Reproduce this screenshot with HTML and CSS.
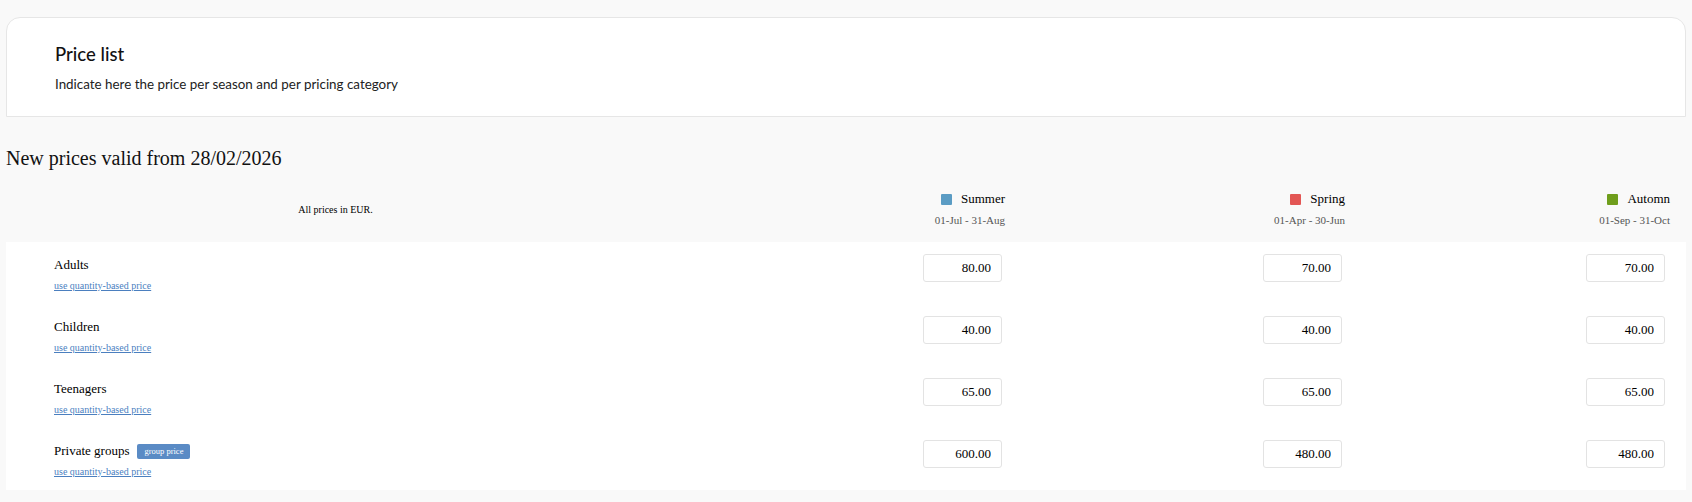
FILE: index.html
```html
<!DOCTYPE html>
<html lang="en">

<head>
    <meta charset="UTF-8">
    <meta name="viewport" content="width=device-width, initial-scale=1.0">
    <title>Price list</title>
    <link rel="stylesheet" href="styles.css">
</head>

<body>
    <div class="page">
        <section class="intro-card">
            <h1 class="intro-title">Price list</h1>
            <p class="intro-text">Indicate here the price per season and per pricing category</p>
        </section>

        <h2 class="valid-from">New prices valid from 28/02/2026</h2>

        <div class="price-table">
            <div class="price-head">
                <div class="currency-note">All prices in EUR.</div>
                <div class="season">
                    <div class="season-name"><span class="swatch swatch-summer"></span>Summer</div>
                    <div class="season-dates">01-Jul - 31-Aug</div>
                </div>
                <div class="season">
                    <div class="season-name"><span class="swatch swatch-spring"></span>Spring</div>
                    <div class="season-dates">01-Apr - 30-Jun</div>
                </div>
                <div class="season">
                    <div class="season-name"><span class="swatch swatch-autumn"></span>Automn</div>
                    <div class="season-dates">01-Sep - 31-Oct</div>
                </div>
            </div>

            <div class="price-body">
                <div class="price-row">
                    <div class="category">
                        <div class="category-name">Adults</div>
                        <a class="quantity-link" href="#">use quantity-based price</a>
                    </div>
                    <div class="price-cell"><input class="price-input" type="text" value="80.00"></div>
                    <div class="price-cell"><input class="price-input" type="text" value="70.00"></div>
                    <div class="price-cell"><input class="price-input" type="text" value="70.00"></div>
                </div>

                <div class="price-row">
                    <div class="category">
                        <div class="category-name">Children</div>
                        <a class="quantity-link" href="#">use quantity-based price</a>
                    </div>
                    <div class="price-cell"><input class="price-input" type="text" value="40.00"></div>
                    <div class="price-cell"><input class="price-input" type="text" value="40.00"></div>
                    <div class="price-cell"><input class="price-input" type="text" value="40.00"></div>
                </div>

                <div class="price-row">
                    <div class="category">
                        <div class="category-name">Teenagers</div>
                        <a class="quantity-link" href="#">use quantity-based price</a>
                    </div>
                    <div class="price-cell"><input class="price-input" type="text" value="65.00"></div>
                    <div class="price-cell"><input class="price-input" type="text" value="65.00"></div>
                    <div class="price-cell"><input class="price-input" type="text" value="65.00"></div>
                </div>

                <div class="price-row">
                    <div class="category">
                        <div class="category-name">Private groups <span class="group-badge">group price</span></div>
                        <a class="quantity-link" href="#">use quantity-based price</a>
                    </div>
                    <div class="price-cell"><input class="price-input" type="text" value="600.00"></div>
                    <div class="price-cell"><input class="price-input" type="text" value="480.00"></div>
                    <div class="price-cell"><input class="price-input" type="text" value="480.00"></div>
                </div>
            </div>
        </div>
    </div>
</body>

</html>
```

FILE: styles.css
```css
* {
    margin: 0;
    padding: 0;
    box-sizing: border-box;
}

body {
    background-color: #f9f9f9;
    color: #111;
    font-family: 'Liberation Serif', 'Times New Roman', serif;
}

.page {
    padding: 17px 6px 0;
}

/* intro card */
.intro-card {
    background: white;
    border: 1px solid #e6e6e6;
    border-radius: 14px 14px 0 0;
    height: 100px;
    padding: 25px 48px 0;
    font-family: Lato, 'Open Sans', sans-serif;
}

.intro-title {
    font-size: 18.5px;
    line-height: 22px;
    font-weight: 500;
    color: #111;
}

.intro-text {
    margin-top: 11px;
    font-size: 13.4px;
    line-height: 16px;
    color: #222;
}

.valid-from {
    margin-top: 29px;
    font-size: 20px;
    line-height: 24px;
    font-weight: normal;
    color: #111;
}

/* table */
.price-head,
.price-row {
    display: grid;
    grid-template-columns: 1fr 340px 340px 325px;
    padding-right: 16px;
}

.price-head {
    padding-top: 21px;
    padding-bottom: 15px;
}

.currency-note {
    align-self: center;
    text-align: center;
    font-size: 10px;
    color: #000;
}

.season {
    text-align: right;
}

.season-name {
    display: flex;
    justify-content: flex-end;
    align-items: center;
    font-size: 13px;
    line-height: 16px;
    color: #000;
}

.swatch {
    width: 11px;
    height: 11px;
    border-radius: 1px;
    margin-right: 9px;
}

.swatch-summer {
    background: #5b9cc4;
}

.swatch-spring {
    background: #e35654;
}

.swatch-autumn {
    background: #6f9e1c;
}

.season-dates {
    margin-top: 6px;
    font-size: 11px;
    line-height: 14px;
    color: #555;
}

.price-body {
    background: white;
}

.price-row {
    height: 62px;
    padding-top: 12px;
}

.category {
    padding-left: 48px;
    padding-top: 3px;
}

.category-name {
    display: flex;
    align-items: center;
    font-size: 13px;
    line-height: 16px;
    color: #000;
}

.group-badge {
    margin-left: 8px;
    padding: 0 7px;
    height: 15px;
    line-height: 15px;
    background: #5a8bc5;
    border-radius: 2px;
    color: white;
    font-size: 8.5px;
}

.quantity-link {
    display: inline-block;
    margin-top: 7px;
    font-size: 10px;
    line-height: 12px;
    color: #4b7fbf;
}

.price-cell {
    text-align: right;
}

.price-input {
    width: 79px;
    height: 28px;
    margin-right: 3px;
    padding: 0 10px;
    border: 1px solid #e3e3e3;
    border-radius: 3px;
    background: white;
    text-align: right;
    font-family: 'Liberation Serif', 'Times New Roman', serif;
    font-size: 13px;
    color: #000;
}

.price-row .price-cell:last-child .price-input {
    margin-right: 5px;
}
```
